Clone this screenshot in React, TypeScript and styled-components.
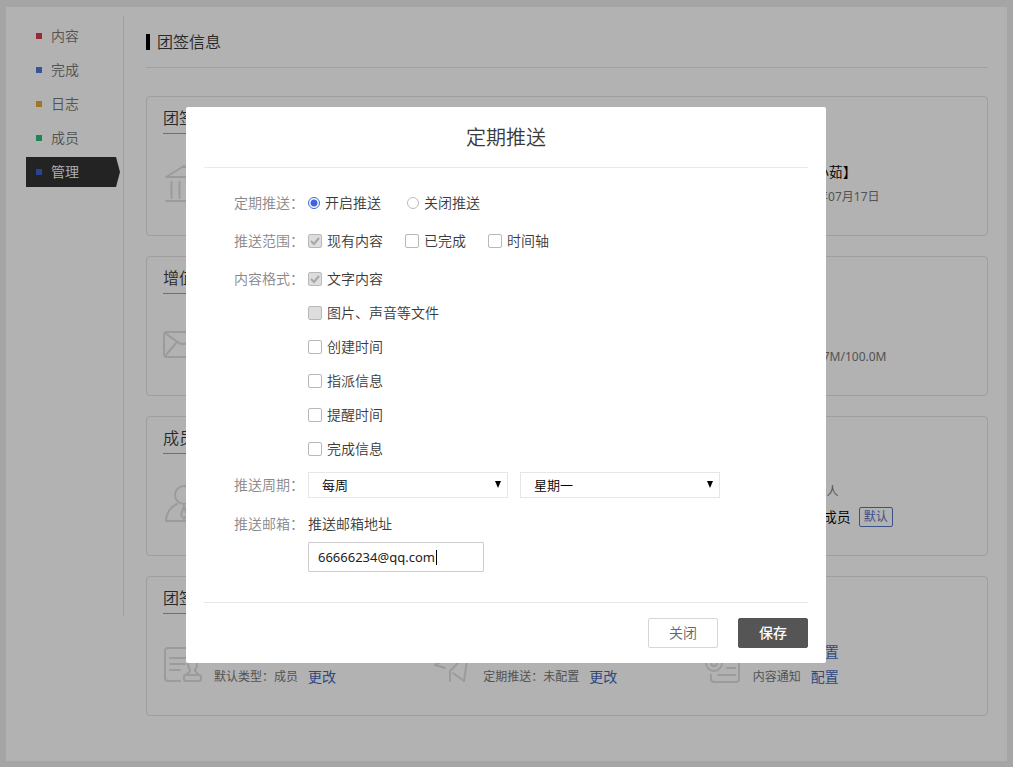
import React from 'react';
import styled, { createGlobalStyle } from 'styled-components';

const GlobalStyle = createGlobalStyle`
  *, *::before, *::after { box-sizing: border-box; }
  body {
    margin: 0;
    background: #ededed;
    color: #3a3a3a;
    font-family: "Noto Sans", "Noto Sans CJK SC", sans-serif;
    font-size: 14px;
    font-weight: 350;
  }
  button, input, select { font-family: inherit; font-weight: inherit; }
`;

/* ---------- page ---------- */

const Page = styled.div`
  display: flex;
  min-height: 100vh;
  padding: 7px 6px 6px;
`;

const Panel = styled.div`
  flex: 1;
  display: flex;
  align-items: flex-start;
  gap: 22px;
  padding: 0 19px 45px 20px;
  background: #fff;
`;

const Sidebar = styled.nav`
  flex: 0 0 98px;
  min-height: 600px;
  margin-top: 9px;
  padding-top: 5px;
  border-right: 1px solid #e6e6e6;
`;

const NavList = styled.ul`
  display: grid;
  gap: 4px;
  margin: 0;
  padding: 0;
  list-style: none;
`;

const NavLink = styled.a<{ $dot: string; $active?: boolean }>`
  display: flex;
  align-items: center;
  gap: 9px;
  width: 94px;
  height: 30px;
  padding-left: 10px;
  color: ${(p) => (p.$active ? '#fff' : '#777')};
  background: ${(p) => (p.$active ? '#333' : 'none')};
  clip-path: ${(p) =>
    p.$active ? 'polygon(0 0, 90px 0, 94px 50%, 90px 100%, 0 100%)' : 'none'};
  line-height: 28px;
  text-decoration: none;

  &::before {
    content: '';
    width: 6px;
    height: 6px;
    background: ${(p) => p.$dot};
  }
`;

const Main = styled.main`
  flex: 1;
  min-width: 0;
`;

const PageHeader = styled.header`
  display: flex;
  align-items: center;
  gap: 7px;
  height: 61px;
  margin-bottom: 28px;
  padding-top: 10px;
  border-bottom: 1px solid #e6e6e6;

  &::before {
    content: '';
    width: 4px;
    height: 16px;
    background: #000;
  }
`;

const PageTitle = styled.h1`
  margin: 0;
  font-size: 16px;
  font-weight: inherit;
  line-height: 24px;
`;

const Cards = styled.div`
  display: grid;
  gap: 20px;
`;

const Card = styled.section`
  height: 140px;
  padding: 0 16px;
  border: 1px solid #e2e2e2;
  border-radius: 4px;
`;

const CardTitle = styled.h2`
  display: inline-block;
  height: 37px;
  margin: 0;
  padding-top: 6px;
  border-bottom: 1px solid #f47c8c;
  font-size: 16px;
  font-weight: inherit;
  line-height: 30px;
  vertical-align: top;
`;

const CardGrid = styled.div`
  display: grid;
  grid-template-columns: repeat(3, 1fr);
  padding-top: 25px;
`;

const Cell = styled.div<{ $column: number }>`
  grid-column: ${(p) => p.$column};
  display: flex;
  gap: 11px;
`;

const CellIcon = styled.svg`
  flex: 0 0 40px;
  width: 40px;
  height: 40px;
  margin-top: 5px;
  fill: none;
  stroke: #dedede;
  stroke-width: 2;
  stroke-linecap: round;
  stroke-linejoin: round;
`;

const Facts = styled.div`
  display: grid;
  grid-auto-rows: 25px;
`;

const Fact = styled.div`
  display: flex;
  align-items: center;
  color: #777;
  font-size: 12px;
  font-weight: 400;
  line-height: 24px;
  white-space: nowrap;
`;

const Strong = styled.span`
  color: #000;
  font-size: 14px;
  font-weight: 350;
`;

const Tag = styled.span`
  height: 20px;
  margin-left: 8px;
  padding: 0 4px;
  border: 1px solid #5875c4;
  border-radius: 2px;
  color: #5875c4;
  font-size: 12px;
  line-height: 18px;
`;

const FactLink = styled.a`
  margin-left: 10px;
  color: #4468b8;
  font-size: 14px;
  text-decoration: none;
`;

/* ---------- dialog ---------- */

const Overlay = styled.div`
  position: fixed;
  inset: 0;
  display: flex;
  align-items: flex-start;
  justify-content: center;
  padding: 107px 1px 0 0;
  background: rgba(0, 0, 0, 0.3);
`;

const Dialog = styled.div`
  width: 640px;
  max-width: 100%;
  padding: 0 18px;
  border-radius: 2px;
  background: #fff;
`;

const DialogTitle = styled.h2`
  height: 61px;
  margin: 0;
  border-bottom: 1px solid #eaeaea;
  font-size: 20px;
  font-weight: inherit;
  line-height: 62px;
  text-align: center;
`;

const Form = styled.form`
  display: grid;
  gap: 8px;
  padding: 20px 30px 30px;
`;

const Row = styled.div<{ $height?: number }>`
  display: grid;
  grid-template-columns: 74px 1fr;
  line-height: ${(p) => p.$height ?? 30}px;
`;

const RowLabel = styled.span`
  color: #888;
`;

const Options = styled.div<{ $gap?: number; $stacked?: boolean }>`
  display: flex;
  flex-direction: ${(p) => (p.$stacked ? 'column' : 'row')};
  gap: ${(p) => p.$gap ?? 22}px;
`;

const Choice = styled.label`
  display: flex;
  align-items: center;
  gap: 5px;
`;

const Radio = styled.input.attrs({ type: 'radio' })`
  appearance: none;
  width: 12px;
  height: 12px;
  margin: 0;
  border: 1px solid #bbb;
  border-radius: 50%;
  background: #fff;

  &:checked {
    border-color: #3b66dd;
    background: radial-gradient(circle, #3b66dd 0 3px, #fff 4px);
  }
`;

const TickBox = styled.span`
  display: grid;
  width: 14px;
  height: 14px;

  > * { grid-area: 1 / 1; }
`;

const Tick = styled.svg`
  width: 14px;
  height: 14px;
  fill: none;
  stroke: #a6a6a6;
  stroke-width: 2;
  pointer-events: none;
`;

const Checkbox = styled.input.attrs({ type: 'checkbox' })`
  appearance: none;
  width: 14px;
  height: 14px;
  margin: 0;
  border: 1px solid #b8b8b8;
  border-radius: 2px;
  background: #fff;

  &:disabled { background: #ddd; }
  & + ${Tick} { visibility: hidden; }
  &:checked + ${Tick} { visibility: visible; }
`;

const Selects = styled.div`
  display: flex;
  gap: 12px;
`;

const SelectBox = styled.div`
  position: relative;
  width: 200px;
`;

const Select = styled.select`
  appearance: none;
  display: block;
  width: 100%;
  height: 26px;
  padding: 0 24px 0 13px;
  border: 1px solid #e6e6e6;
  border-radius: 0;
  background: #fff;
  color: #000;
  font-size: 13px;
`;

const Arrow = styled.svg`
  position: absolute;
  top: 9px;
  right: 7px;
  width: 6px;
  height: 7px;
  fill: #000;
  pointer-events: none;
`;

const EmailLabel = styled.label`
  display: block;
`;

const EmailField = styled.div`
  position: relative;
  width: 176px;
`;

const EmailInput = styled.input`
  display: block;
  width: 100%;
  height: 30px;
  padding: 0 9px;
  border: 1px solid #ccc;
  border-radius: 1px;
  color: #222;
  font-size: 13px;
  font-weight: 400;
  outline: none;
`;

const Caret = styled.span`
  position: absolute;
  top: 8px;
  left: 128px;
  width: 1px;
  height: 15px;
  background: #000;
`;

const DialogFooter = styled.footer`
  display: flex;
  justify-content: flex-end;
  gap: 20px;
  padding: 15px 0;
  border-top: 1px solid #e6e6e6;
`;

const Button = styled.button<{ $primary?: boolean }>`
  width: 70px;
  height: 30px;
  padding: 0 0 2px;
  border: 1px solid ${(p) => (p.$primary ? '#555' : '#d6d6d6')};
  border-radius: 2px;
  background: ${(p) => (p.$primary ? '#555' : '#fff')};
  color: ${(p) => (p.$primary ? '#fff' : '#666')};
  font-size: 14px;
  font-weight: ${(p) => (p.$primary ? 500 : 'inherit')};
`;

/* ---------- icons ---------- */

const BankIcon = () => (
  <CellIcon viewBox="0 0 40 40" aria-hidden="true">
    <path d="M3 13 21 2 39 13H3M3 37H39M8.500 18V34M16.500 18V34M25.500 18V34M33.500 18V34" />
  </CellIcon>
);

const MailIcon = () => (
  <CellIcon viewBox="0 0 40 40" aria-hidden="true" strokeWidth="1">
    <rect x="1" y="8" width="38" height="25" rx="3" />
    <path d="M2 9 16 19Q20 21 24 19L38 9M2 32 14 18M38 32 26 18" />
  </CellIcon>
);

const MemberIcon = () => (
  <CellIcon viewBox="0 0 40 40" aria-hidden="true">
    <circle cx="21" cy="11" r="9" />
    <path d="M14 20C7 23 3 30 3 37H39C39 30 35 23 28 20M21 22 18 31 21 35 24 31Z" />
  </CellIcon>
);

const StampIcon = () => (
  <CellIcon viewBox="0 0 40 40" aria-hidden="true">
    <path d="M17 37H5Q2 37 2 34V7Q2 4 5 4H27Q30 4 30 7V14M7 14H23M7 20H22M7 26H17" />
    <path d="M27 27C28 26 25 24 25 21A4.500 4.500 0 0 1 34 21C34 24 31 26 32 27L36 31M27 27 23 31" />
    <rect x="21" y="31" width="17" height="6" rx="2" />
  </CellIcon>
);

const PlaneIcon = () => (
  <CellIcon viewBox="0 0 40 40" aria-hidden="true">
    <path d="M13 24 3 21 37 3 32 37 21 29M18 37V27L31 14" />
  </CellIcon>
);

const NoticeIcon = () => (
  <CellIcon viewBox="0 0 40 40" aria-hidden="true">
    <circle cx="12" cy="19" r="8" />
    <circle cx="12" cy="19" r="3" />
    <path d="M9 31V35Q9 38 12 38H34Q37 38 37 35V10Q37 7 34 7H21M25 24H33M16 31H33" />
  </CellIcon>
);

/* ---------- content ---------- */

const nav = [
  { label: '内容', dot: '#dc3c4e' },
  { label: '完成', dot: '#5078dc' },
  { label: '日志', dot: '#eba636' },
  { label: '成员', dot: '#25c07c' },
  { label: '管理', dot: '#4060d0', active: true },
];

const formats = ['创建时间', '指派信息', '提醒时间', '完成信息'];

const Check = ({
  label,
  checked,
  disabled,
}: {
  label: string;
  checked?: boolean;
  disabled?: boolean;
}) => (
  <Choice>
    <TickBox>
      <Checkbox defaultChecked={checked} disabled={disabled} />
      <Tick viewBox="0 0 14 14" aria-hidden="true">
        <path d="M3 7 6 10 11 4" />
      </Tick>
    </TickBox>
    {label}
  </Choice>
);

const Dropdown = ({ label, options }: { label: string; options: string[] }) => (
  <SelectBox>
    <Select aria-label={label}>
      {options.map((o) => (
        <option key={o}>{o}</option>
      ))}
    </Select>
    <Arrow viewBox="0 0 6 7" aria-hidden="true">
      <path d="M0 0H6L3 7Z" />
    </Arrow>
  </SelectBox>
);

export default function App() {
  return (
    <>
      <GlobalStyle />
      <Page>
        <Panel>
          <Sidebar>
            <NavList>
              {nav.map((n) => (
                <li key={n.label}>
                  <NavLink href="#" $dot={n.dot} $active={n.active}>
                    {n.label}
                  </NavLink>
                </li>
              ))}
            </NavList>
          </Sidebar>
          <Main>
            <PageHeader>
              <PageTitle>团签信息</PageTitle>
            </PageHeader>
            <Cards>
              <Card>
                <CardTitle>团签信息</CardTitle>
                <CardGrid>
                  <Cell $column={1}>
                    <BankIcon />
                  </Cell>
                  <Cell $column={3}>
                    <CellIcon as="span" />
                    <Facts>
                      <Fact>
                        创始人：<Strong>【小茹】</Strong>
                      </Fact>
                      <Fact>时间：2018年07月17日</Fact>
                    </Facts>
                  </Cell>
                </CardGrid>
              </Card>
              <Card>
                <CardTitle>增值服务</CardTitle>
                <CardGrid>
                  <Cell $column={1}>
                    <MailIcon />
                  </Cell>
                  <Cell $column={3}>
                    <CellIcon as="span" />
                    <Facts>
                      <Fact />
                      <Fact>已用空间：0.7M/100.0M</Fact>
                    </Facts>
                  </Cell>
                </CardGrid>
              </Card>
              <Card>
                <CardTitle>成员管理</CardTitle>
                <CardGrid>
                  <Cell $column={1}>
                    <MemberIcon />
                  </Cell>
                  <Cell $column={3}>
                    <CellIcon as="span" />
                    <Facts>
                      <Fact>成员人数：10人</Fact>
                      <Fact>
                        <Strong>新加入团签成员</Strong>
                        <Tag>默认</Tag>
                      </Fact>
                    </Facts>
                  </Cell>
                </CardGrid>
              </Card>
              <Card>
                <CardTitle>团签设置</CardTitle>
                <CardGrid>
                  <Cell $column={1}>
                    <StampIcon />
                    <Facts>
                      <Fact />
                      <Fact>
                        默认类型：成员<FactLink href="#">更改</FactLink>
                      </Fact>
                    </Facts>
                  </Cell>
                  <Cell $column={2}>
                    <PlaneIcon />
                    <Facts>
                      <Fact />
                      <Fact>
                        定期推送：未配置<FactLink href="#">更改</FactLink>
                      </Fact>
                    </Facts>
                  </Cell>
                  <Cell $column={3}>
                    <NoticeIcon />
                    <Facts>
                      <Fact>
                        成员通知<FactLink href="#">配置</FactLink>
                      </Fact>
                      <Fact>
                        内容通知<FactLink href="#">配置</FactLink>
                      </Fact>
                    </Facts>
                  </Cell>
                </CardGrid>
              </Card>
            </Cards>
          </Main>
        </Panel>
      </Page>

      <Overlay>
        <Dialog role="dialog" aria-modal="true" aria-labelledby="push-title">
          <DialogTitle id="push-title">定期推送</DialogTitle>
          <Form id="push-form" onSubmit={(e) => e.preventDefault()}>
            <Row role="radiogroup" aria-labelledby="push-state">
              <RowLabel id="push-state">定期推送：</RowLabel>
              <Options $gap={26}>
                <Choice>
                  <Radio name="push" defaultChecked />
                  开启推送
                </Choice>
                <Choice>
                  <Radio name="push" />
                  关闭推送
                </Choice>
              </Options>
            </Row>
            <Row role="group" aria-labelledby="push-scope">
              <RowLabel id="push-scope">推送范围：</RowLabel>
              <Options>
                <Check label="现有内容" checked disabled />
                <Check label="已完成" />
                <Check label="时间轴" />
              </Options>
            </Row>
            <Row role="group" aria-labelledby="push-format">
              <RowLabel id="push-format">内容格式：</RowLabel>
              <Options $stacked $gap={4}>
                <Check label="文字内容" checked disabled />
                <Check label="图片、声音等文件" disabled />
                {formats.map((f) => (
                  <Check key={f} label={f} />
                ))}
              </Options>
            </Row>
            <Row $height={26}>
              <RowLabel>推送周期：</RowLabel>
              <Selects>
                <Dropdown label="推送周期" options={['每周']} />
                <Dropdown label="星期" options={['星期一']} />
              </Selects>
            </Row>
            <Row $height={36}>
              <RowLabel>推送邮箱：</RowLabel>
              <div>
                <EmailLabel htmlFor="push-email">推送邮箱地址</EmailLabel>
                <EmailField>
                  <EmailInput id="push-email" type="email" defaultValue="66666234@qq.com" />
                  <Caret />
                </EmailField>
              </div>
            </Row>
          </Form>
          <DialogFooter>
            <Button type="button">关闭</Button>
            <Button type="submit" form="push-form" $primary>
              保存
            </Button>
          </DialogFooter>
        </Dialog>
      </Overlay>
    </>
  );
}
